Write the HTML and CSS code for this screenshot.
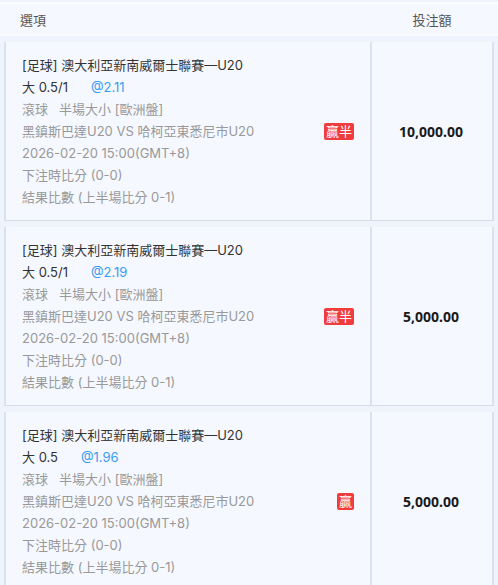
FILE: index.html
```html
<!DOCTYPE html>
<html lang="zh-Hant">
<head>
<meta charset="utf-8">
<link rel="stylesheet" href="styles.css">
</head>
<body>
<div class="page">
  <div class="head">
    <div class="head-opt">選項</div>
    <div class="head-amt">投注額</div>
  </div>

  <div class="row">
    <div class="cell-main">
      <div class="info">
        <div class="dark">[足球] 澳大利亞新南威爾士聯賽—U20</div>
        <div class="dark">大 0.5/1<span class="odds">@2.11</span></div>
        <div>滾球<span class="gap"></span>半場大小 [歐洲盤]</div>
        <div>黑鎮斯巴達U20 VS 哈柯亞東悉尼市U20</div>
        <div>2026-02-20 15:00(GMT+8)</div>
        <div>下注時比分 (0-0)</div>
        <div>結果比數 (上半場比分 0-1)</div>
      </div>
      <span class="badge">贏半</span>
    </div>
    <div class="cell-amt">10,000.00</div>
  </div>

  <div class="row">
    <div class="cell-main">
      <div class="info">
        <div class="dark">[足球] 澳大利亞新南威爾士聯賽—U20</div>
        <div class="dark">大 0.5/1<span class="odds">@2.19</span></div>
        <div>滾球<span class="gap"></span>半場大小 [歐洲盤]</div>
        <div>黑鎮斯巴達U20 VS 哈柯亞東悉尼市U20</div>
        <div>2026-02-20 15:00(GMT+8)</div>
        <div>下注時比分 (0-0)</div>
        <div>結果比數 (上半場比分 0-1)</div>
      </div>
      <span class="badge">贏半</span>
    </div>
    <div class="cell-amt">5,000.00</div>
  </div>

  <div class="row">
    <div class="cell-main">
      <div class="info">
        <div class="dark">[足球] 澳大利亞新南威爾士聯賽—U20</div>
        <div class="dark">大 0.5<span class="odds">@1.96</span></div>
        <div>滾球<span class="gap"></span>半場大小 [歐洲盤]</div>
        <div>黑鎮斯巴達U20 VS 哈柯亞東悉尼市U20</div>
        <div>2026-02-20 15:00(GMT+8)</div>
        <div>下注時比分 (0-0)</div>
        <div>結果比數 (上半場比分 0-1)</div>
      </div>
      <span class="badge">贏</span>
    </div>
    <div class="cell-amt">5,000.00</div>
  </div>
</div>
</body>
</html>
```

FILE: styles.css
```css
html, body {
  margin: 0;
  padding: 0;
  background: #eef3fc;
}
body {
  font-family: Inter, "Noto Sans CJK TC", sans-serif;
  font-size: 13px;
  color: #999;
}
.page {
  padding-top: 2px;
}
.head {
  display: grid;
  grid-template-columns: 1fr 120px;
  height: 30px;
  align-items: center;
  background: #f5f8fe;
  border-top: 2px solid #fafcff;
  border-bottom: 2px solid #fafcff;
  color: #555;
  font-size: 13px;
  padding-right: 6px;
  margin-bottom: 6px;
}
.head-opt {
  padding-left: 20px;
}
.head-amt {
  text-align: center;
}
.row {
  display: grid;
  grid-template-columns: 364px 120px;
  margin: 0 4px 6px 4px;
  border-left: 2px solid #dbe1ee;
  border-right: 2px solid #dbe1ee;
  border-bottom: 1px solid #d6dbe5;
  background: #f5f8ff;
}
.cell-main {
  display: flex;
  align-items: center;
  justify-content: space-between;
  padding: 12px 16px 12px 16px;
}
.info {
  line-height: 22px;
  white-space: nowrap;
}
.dark {
  color: #333;
}
.odds {
  color: #3a9bf4;
  margin-left: 23px;
}
.gap {
  display: inline-block;
  width: 11px;
}
.badge {
  background: #f03c3c;
  color: #fff;
  font-size: 13px;
  line-height: 17px;
  padding: 0 2px;
  border-radius: 2px;
}
.cell-amt {
  border-left: 2px solid #dbe1ee;
  display: flex;
  align-items: center;
  justify-content: center;
  color: #1a1a1a;
  font-family: "Noto Sans", sans-serif;
  font-weight: 700;
  font-size: 14px;
}
```
